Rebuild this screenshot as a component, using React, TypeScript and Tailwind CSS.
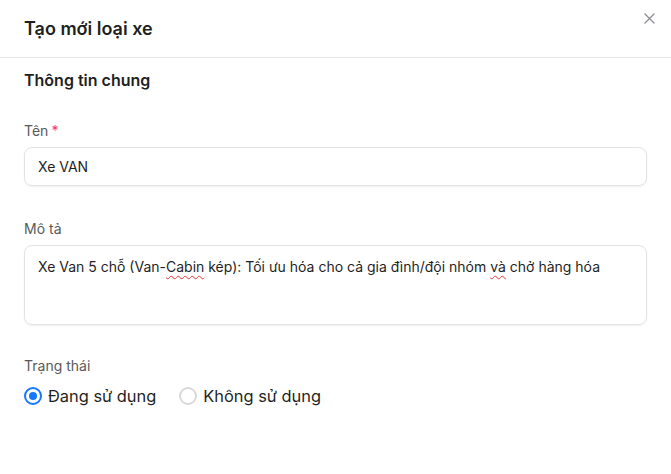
import React from "react";

export default function App() {
  return (
    <div className="w-[671px] h-[474px] bg-white text-[#1f1f1f]" style={{ fontFamily: "Inter, 'Noto Sans', sans-serif" }}>
      <div className="relative h-[58px] flex items-center px-6 border-b border-[#e8e8ec]">
        <h1 className="text-[18px] font-semibold leading-none">Tạo mới loại xe</h1>
        <button className="absolute right-[14px] top-[10px] w-[16px] h-[16px] flex items-center justify-center text-[#8c8c94]">
          <svg width="11" height="11" viewBox="0 0 11 11" fill="none" stroke="currentColor" strokeWidth="1.3" strokeLinecap="round">
            <path d="M1 1L10 10M10 1L1 10" />
          </svg>
        </button>
      </div>
      <div className="px-6">
        <div className="mt-[12px] h-[20px] flex items-center text-[16px] font-semibold">Thông tin chung</div>

        <div className="mt-[31px] h-[18px] flex items-center text-[14px] text-[#595959]">
          Tên<span className="ml-[3px] text-[#f5317f]">*</span>
        </div>
        <div className="mt-[8px] h-[39px] w-[623px] rounded-[8px] border-[1.5px] border-[#e3e3e6] shadow-[0_1px_2px_rgba(0,0,0,0.06)] flex items-center px-[13px] text-[14px]">
          Xe VAN
        </div>

        <div className="mt-[33px] h-[18px] flex items-center text-[14px] text-[#595959]">Mô tả</div>
        <div className="mt-[8px] h-[80px] w-[623px] rounded-[8px] border-[1.5px] border-[#e3e3e6] shadow-[0_1px_2px_rgba(0,0,0,0.06)] px-[13px] pt-[10px] text-[14px] leading-[22px] whitespace-nowrap">
          Xe Van 5 chỗ (Van-<span className="underline decoration-wavy decoration-[#e53935] decoration-[1px] underline-offset-[3px]">Cabin</span> kép): Tối ưu hóa cho cả gia đình/đội nhóm <span className="underline decoration-wavy decoration-[#e53935] decoration-[1px] underline-offset-[3px]">và</span> chở hàng hóa
        </div>

        <div className="mt-[31px] h-[18px] flex items-center text-[14px] text-[#595959]">Trạng thái</div>
        <div className="mt-[10px] flex items-center gap-[23px] text-[16.4px]">
          <label className="flex items-center gap-[6px]">
            <span className="w-[18px] h-[18px] rounded-full border-[2px] border-[#1677ff] flex items-center justify-center">
              <span className="w-[8px] h-[8px] rounded-full bg-[#1677ff]" />
            </span>
            Đang sử dụng
          </label>
          <label className="flex items-center gap-[6px]">
            <span className="w-[18px] h-[18px] rounded-full border-[2px] border-[#d9d9d9]" />
            Không sử dụng
          </label>
        </div>
      </div>
    </div>
  );
}
